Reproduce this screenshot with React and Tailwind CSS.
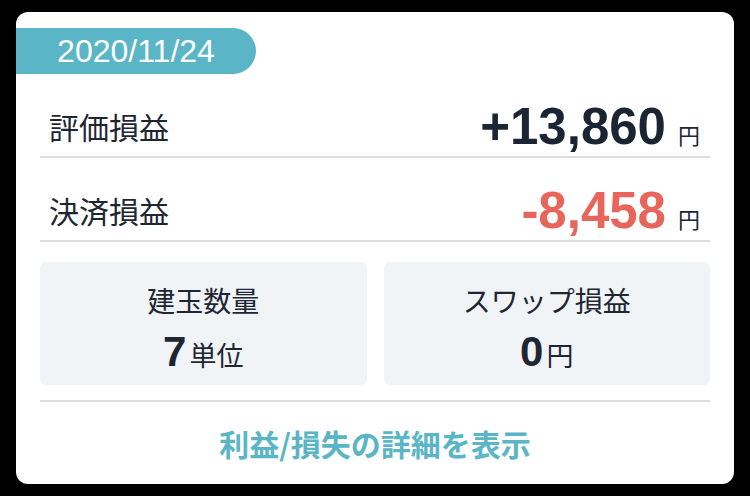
import React from "react";

const jp = { fontFamily: '"Noto Sans CJK JP", sans-serif' };
const num = { fontFamily: '"Liberation Sans", "Noto Sans CJK JP", sans-serif' };

const PnlRow = ({ label, value, color }) => (
  <div className="flex items-center justify-between h-[84px] pt-[22px] border-b-2 border-[#dcdee2]">
    <span className="text-[30px] text-[#1e2633] pl-[9px]" style={jp}>
      {label}
    </span>
    <span className="flex items-baseline pr-[10px]">
      <span className={`text-[51px] font-bold leading-none ${color}`} style={num}>
        {value}
      </span>
      <span className="text-[22px] text-[#1e2633] ml-[12px]" style={jp}>
        円
      </span>
    </span>
  </div>
);

const StatBox = ({ label, value, unit }) => (
  <div className="flex-1 h-[123px] bg-[#f1f4f6] rounded-[6px] flex flex-col items-center pt-[21px]">
    <span className="text-[28px] leading-[34px] text-[#1e2633]" style={jp}>
      {label}
    </span>
    <span className="flex items-baseline mt-[14px]">
      <span className="text-[42px] font-bold leading-none text-[#1e2633]" style={num}>
        {value}
      </span>
      <span className="text-[27px] text-[#1e2633] ml-[3px]" style={jp}>
        {unit}
      </span>
    </span>
  </div>
);

export default function App() {
  return (
    <div className="w-[750px] h-[496px] bg-black pt-[12px] px-[16px]">
      <div className="w-[718px] h-[472px] bg-white rounded-[12px] pt-[16px] overflow-hidden">
        <div
          className="w-[240px] h-[46px] bg-[#5ab5c6] rounded-r-full flex items-center justify-center text-white text-[32px]"
          style={num}
        >
          2020/11/24
        </div>
        <div className="px-[24px]">
          <PnlRow label="評価損益" value="+13,860" color="text-[#1b2433]" />
          <PnlRow label="決済損益" value="-8,458" color="text-[#e8655b]" />
          <div className="flex gap-[17px] mt-[20px]">
            <StatBox label="建玉数量" value="7" unit="単位" />
            <StatBox label="スワップ損益" value="0" unit="円" />
          </div>
          <div className="mt-[15px] border-t-2 border-[#dcdee2]" />
          <div
            className="h-[82px] flex items-center justify-center text-[30px] font-bold text-[#5ab5c6]"
            style={jp}
          >
            利益/損失の詳細を表示
          </div>
        </div>
      </div>
    </div>
  );
}
